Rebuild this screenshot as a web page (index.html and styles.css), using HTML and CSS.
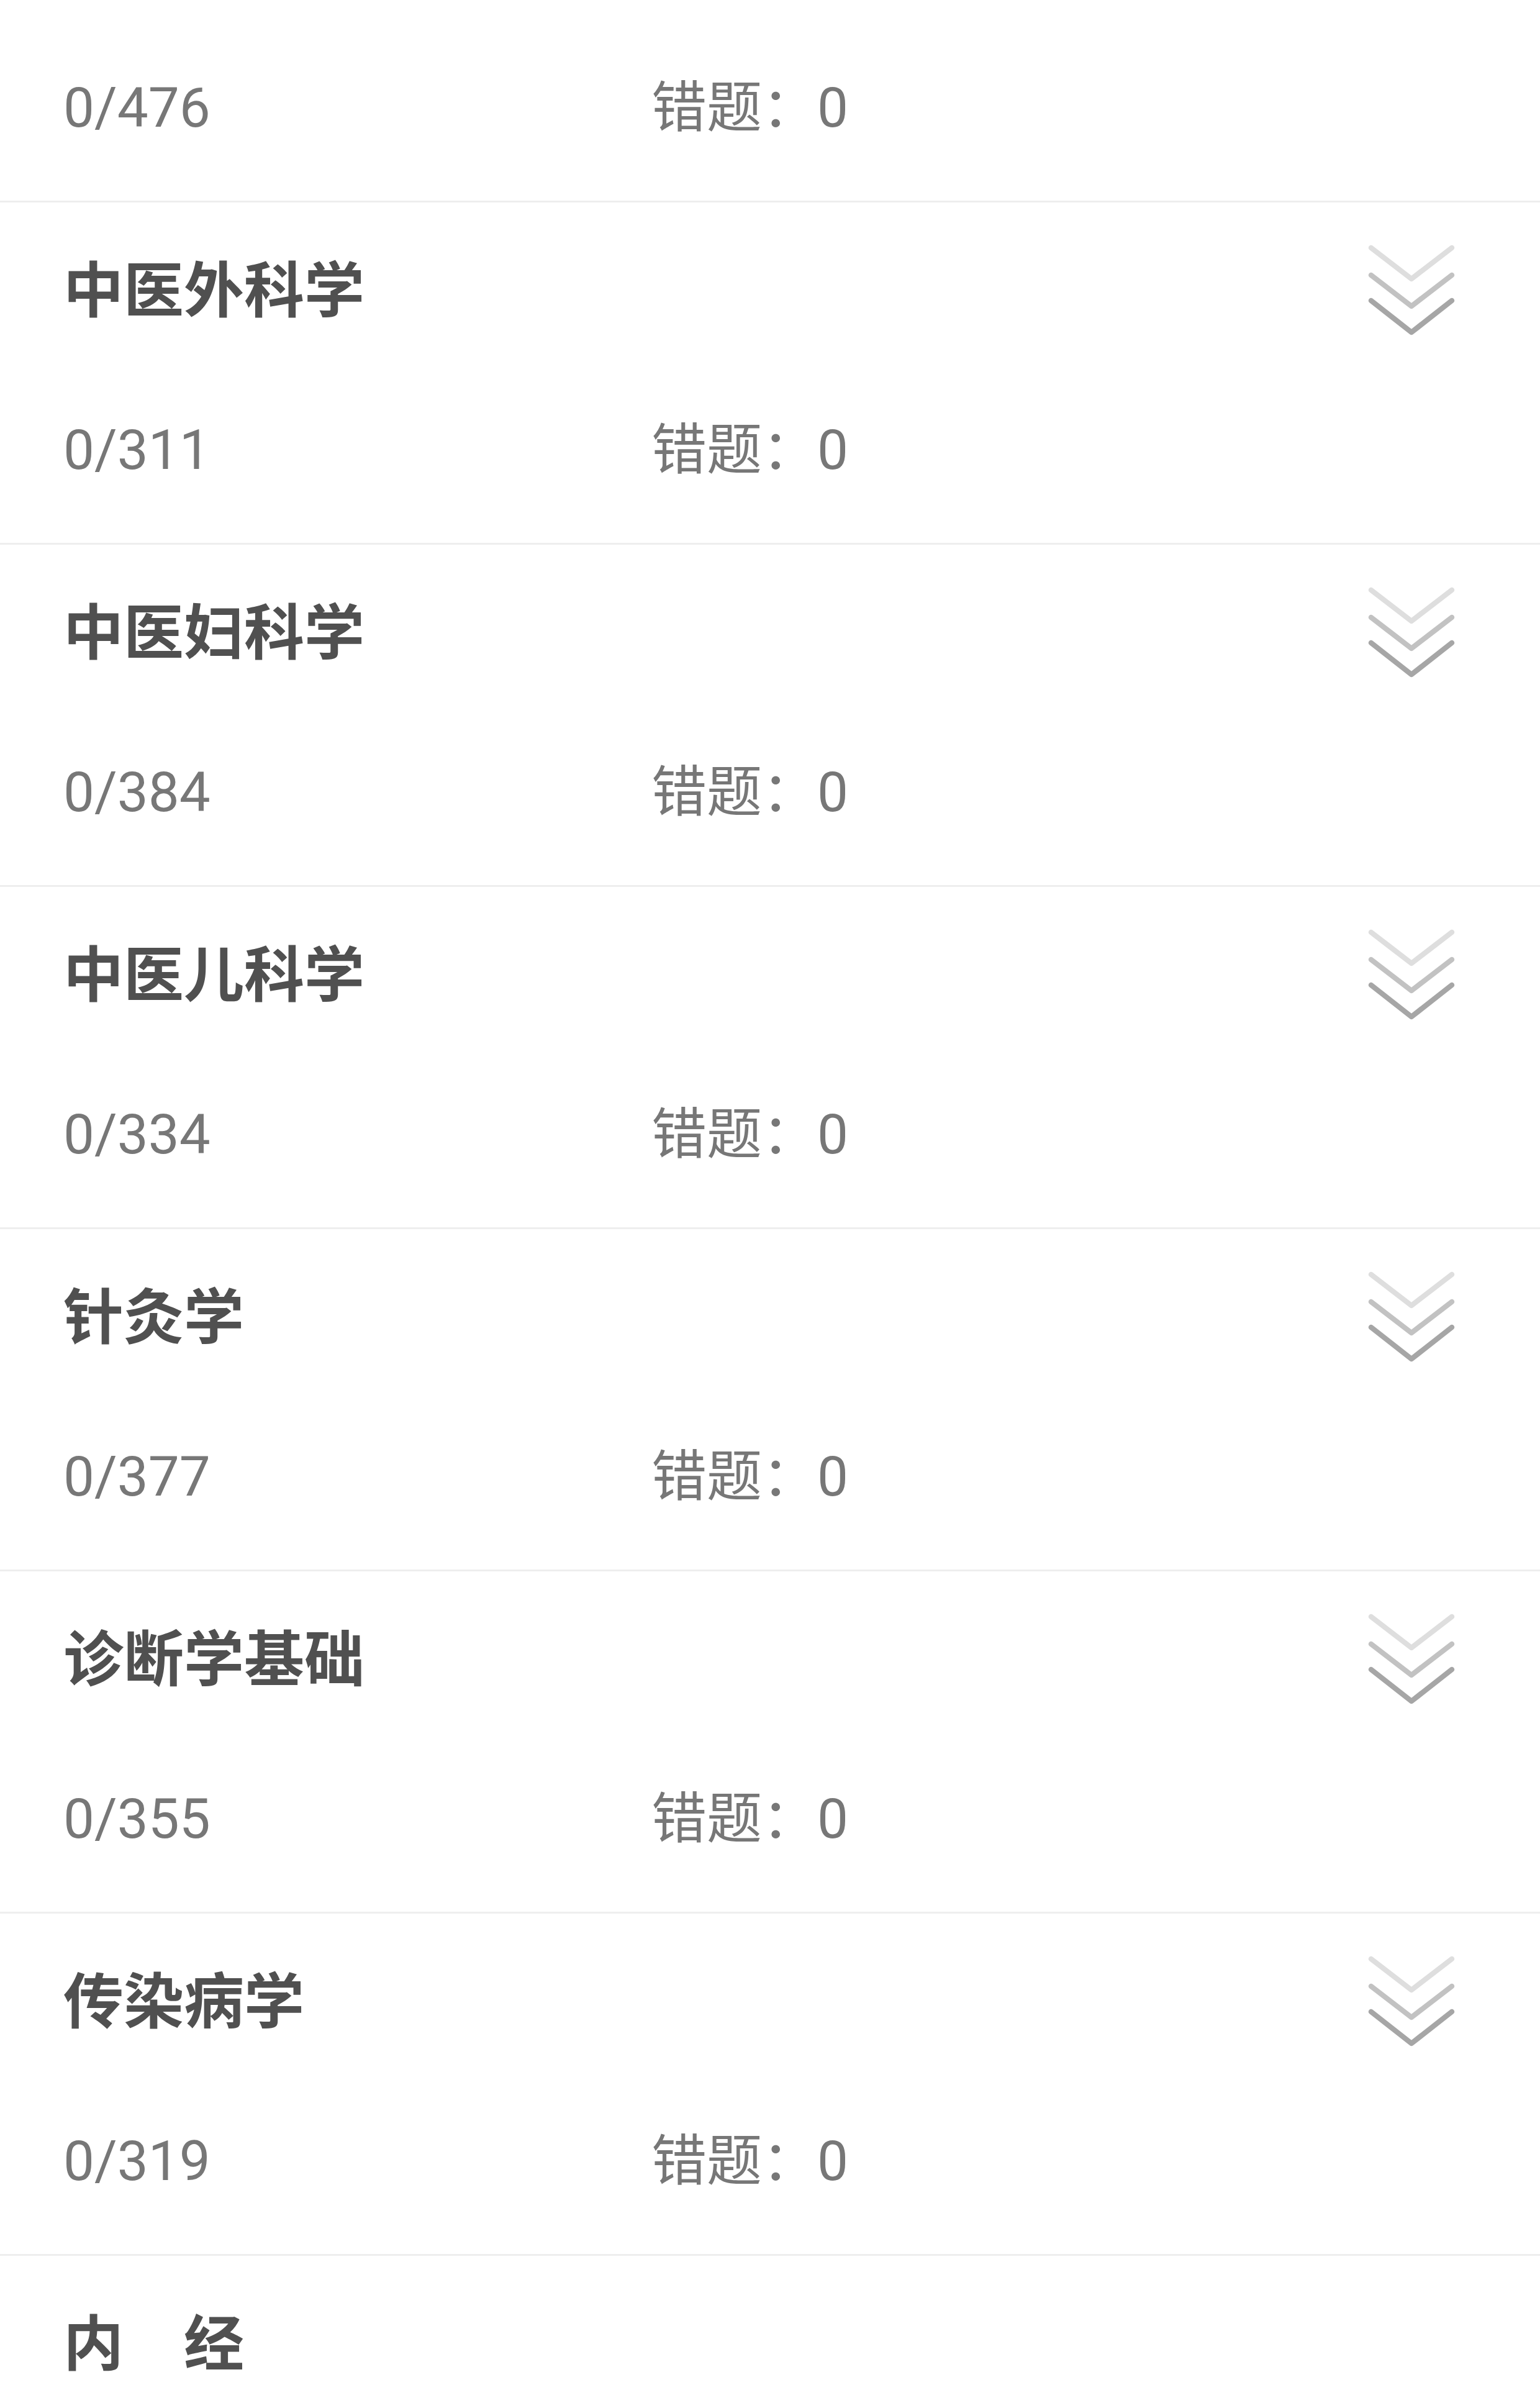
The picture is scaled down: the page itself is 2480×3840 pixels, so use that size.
FILE: index.html
```html
<!DOCTYPE html>
<html lang="zh-CN">
<head>
    <meta charset="UTF-8">
    <meta name="viewport" content="width=device-width, initial-scale=1.0">
    <title>题库</title>
    <link rel="stylesheet" href="styles.css">
</head>
<body>
    <div class="list">
        <div class="item cut">
            <div class="item-stats">
                <span class="done">0/476</span>
                <span class="wrong">错题：0</span>
            </div>
        </div>

        <div class="item">
            <div class="item-head">
                <span class="title">中医外科学</span>
                <svg class="more" viewBox="0 0 140 150"><path class="c1" d="M5 6 L70 56 L135 6"/><path class="c2" d="M5 50 L70 100 L135 50"/><path class="c3" d="M5 91 L70 142 L135 91"/></svg>
            </div>
            <div class="item-stats">
                <span class="done">0/311</span>
                <span class="wrong">错题：0</span>
            </div>
        </div>

        <div class="item">
            <div class="item-head">
                <span class="title">中医妇科学</span>
                <svg class="more" viewBox="0 0 140 150"><path class="c1" d="M5 6 L70 56 L135 6"/><path class="c2" d="M5 50 L70 100 L135 50"/><path class="c3" d="M5 91 L70 142 L135 91"/></svg>
            </div>
            <div class="item-stats">
                <span class="done">0/384</span>
                <span class="wrong">错题：0</span>
            </div>
        </div>

        <div class="item">
            <div class="item-head">
                <span class="title">中医儿科学</span>
                <svg class="more" viewBox="0 0 140 150"><path class="c1" d="M5 6 L70 56 L135 6"/><path class="c2" d="M5 50 L70 100 L135 50"/><path class="c3" d="M5 91 L70 142 L135 91"/></svg>
            </div>
            <div class="item-stats">
                <span class="done">0/334</span>
                <span class="wrong">错题：0</span>
            </div>
        </div>

        <div class="item">
            <div class="item-head">
                <span class="title">针灸学</span>
                <svg class="more" viewBox="0 0 140 150"><path class="c1" d="M5 6 L70 56 L135 6"/><path class="c2" d="M5 50 L70 100 L135 50"/><path class="c3" d="M5 91 L70 142 L135 91"/></svg>
            </div>
            <div class="item-stats">
                <span class="done">0/377</span>
                <span class="wrong">错题：0</span>
            </div>
        </div>

        <div class="item">
            <div class="item-head">
                <span class="title">诊断学基础</span>
                <svg class="more" viewBox="0 0 140 150"><path class="c1" d="M5 6 L70 56 L135 6"/><path class="c2" d="M5 50 L70 100 L135 50"/><path class="c3" d="M5 91 L70 142 L135 91"/></svg>
            </div>
            <div class="item-stats">
                <span class="done">0/355</span>
                <span class="wrong">错题：0</span>
            </div>
        </div>

        <div class="item">
            <div class="item-head">
                <span class="title">传染病学</span>
                <svg class="more" viewBox="0 0 140 150"><path class="c1" d="M5 6 L70 56 L135 6"/><path class="c2" d="M5 50 L70 100 L135 50"/><path class="c3" d="M5 91 L70 142 L135 91"/></svg>
            </div>
            <div class="item-stats">
                <span class="done">0/319</span>
                <span class="wrong">错题：0</span>
            </div>
        </div>

        <div class="item">
            <div class="item-head">
                <span class="title">内　经</span>
            </div>
        </div>
    </div>
</body>
</html>
```

FILE: styles.css
```css
body {
    margin: 0;
    padding: 0;
    background-color: #fff;
    font-family: Roboto, "Noto Sans CJK SC", sans-serif;
}
.list {
    height: 3840px;
    overflow: hidden;
}
.item {
    display: flex;
    flex-direction: column;
    box-sizing: border-box;
    height: 551px;
    padding: 0 137px 42px 102px;
    border-top: 3px solid #eeeeee;
}
.item.cut {
    height: 323px;
    border-top: none;
    justify-content: flex-end;
}
.item-head {
    display: flex;
    align-items: center;
    justify-content: space-between;
    height: 290px;
    flex-shrink: 0;
}
.title {
    font-family: "Noto Sans CJK SC", sans-serif;
    font-size: 97px;
    font-weight: 700;
    line-height: 1;
    color: #505050;
    margin-bottom: 24px;
}
.more {
    width: 140px;
    height: 150px;
    margin-top: -6px;
}
.more path {
    fill: none;
    stroke-width: 8.5;
    stroke-linecap: round;
    stroke-linejoin: round;
}
.more .c1 {
    stroke: #dedede;
}
.more .c2 {
    stroke: #c2c2c2;
}
.more .c3 {
    stroke: #a6a6a6;
}
.item-stats {
    display: grid;
    grid-template-columns: 947px 1fr;
    align-items: center;
    height: 216px;
    flex-shrink: 0;
    font-size: 89px;
    line-height: 1;
    color: #777;
}
```
